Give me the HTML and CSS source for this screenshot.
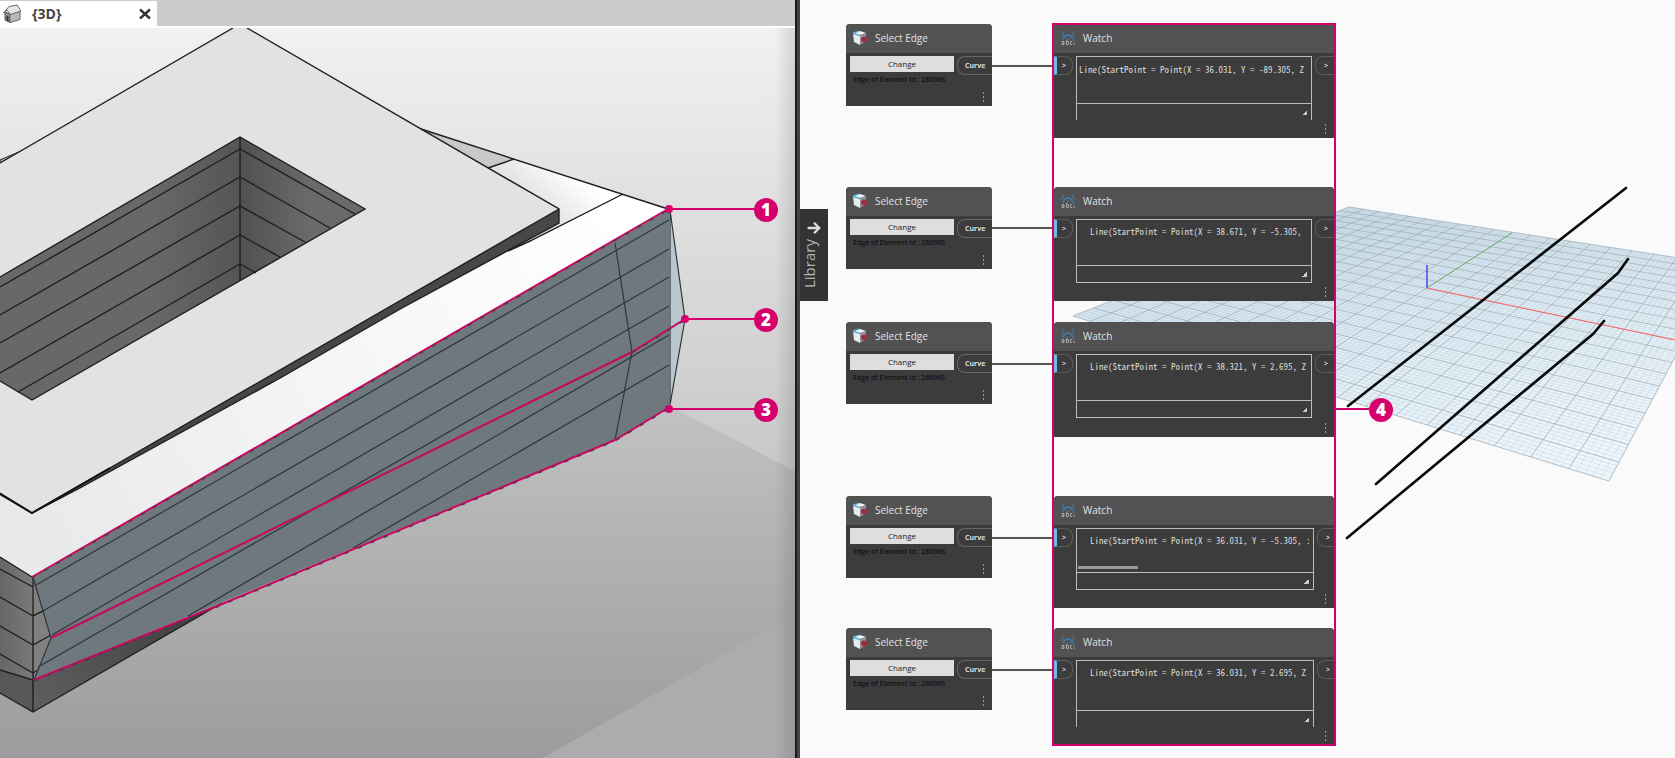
FILE: index.html
```html
<!DOCTYPE html>
<html lang="en">
<head>
<meta charset="utf-8">
<title>Select Edge and Watch</title>
<link rel="stylesheet" href="styles.css">
</head>
<body>
<svg class="defs" aria-hidden="true">
  <symbol id="icon-edge" viewBox="0 0 16 16">
    <path d="M1 3 8 1l6 2-6 2z" fill="#f4f7f9"/>
    <path d="M1 3l7 2v10l-6-3z" fill="#e6edf1"/>
    <path d="M8 5l6-2v8l-6 4z" fill="#8d959a"/>
    <path d="M1 3.500 8 5.500M1.500 3 7 1.200" stroke="#5fb0dc" stroke-width="1.400" fill="none"/>
    <circle cx="12" cy="9.500" r="3" fill="#a8303e"/>
    <path d="M10.500 8l3 3" stroke="#5d2a30"/>
  </symbol>
  <symbol id="icon-watch" viewBox="0 0 16 16">
    <path d="M4 1.500C2.500 1.500 3 4 2.500 5.500L1.500 7M12 1.500c1.500 0 1 2.500 1.500 4l1 1.500" stroke="#4a7ea6" fill="none"/>
    <path d="M3 9.500c2-6 8-6 10 0" stroke="#3d7fb5" stroke-width="1.500" fill="none"/>
    <path d="M6.500 9.500q1.500-2 3 0" stroke="#3d7fb5" fill="none"/>
    <path d="M1.500 11.500h2.500v3H2v-1.500h2M6.500 10v4.500h2v-3h-2M12 11.500h-1.500v3H12M14 10.500v1M14 13v2" stroke="#a5a5a5" fill="none"/>
  </symbol>
</svg>
<main class="app">
  <section class="view3d" aria-label="3D view">
    <nav class="tabs">
      <div class="tab">
        <svg class="tab-icon" viewBox="0 0 20 20" aria-hidden="true">
          <path d="M3 8v8l5 2.500V10z" fill="#8f9599" stroke="#555"/>
          <path d="M8 10v8.500l10-3V7z" fill="#b4babd" stroke="#666"/>
          <path d="M1.500 9 7 2.500 15 1l4 6-10.500 3.500L5 6z" fill="#e2e6e8" stroke="#666"/>
          <path d="M4.500 11.500l2 1v5l-2-1z" fill="#333"/>
        </svg>
        <a class="tab-name" href="#scene">{3D}</a>
        <button class="tab-close" aria-label="Close">
          <svg viewBox="0 0 12 12"><path d="M1 1.500l10 9M11 1.500l-10 9" stroke="#333" stroke-width="2.400"/></svg>
        </button>
      </div>
    </nav>
    <svg class="scene" id="scene" viewBox="0 28 795 730" preserveAspectRatio="xMinYMin slice">
      <defs>
        <linearGradient id="sky" gradientUnits="userSpaceOnUse" x1="0" y1="28" x2="0" y2="758">
          <stop offset="0" stop-color="#f1f1f1"/><stop offset=".3" stop-color="#dcdcdc"/><stop offset=".6" stop-color="#c8c8c8"/><stop offset="1" stop-color="#a6a6a6"/>
        </linearGradient>
        <linearGradient id="ground" gradientUnits="userSpaceOnUse" x1="0" y1="400" x2="0" y2="758">
          <stop offset="0" stop-color="#c2c2c2"/><stop offset="1" stop-color="#9c9c9c"/>
        </linearGradient>
        <linearGradient id="slope" gradientUnits="userSpaceOnUse" x1="20" y1="560" x2="620" y2="200">
          <stop offset="0" stop-color="#e8e8e8"/><stop offset=".5" stop-color="#f5f5f5"/><stop offset="1" stop-color="#fff"/>
        </linearGradient>
        <linearGradient id="back" gradientUnits="userSpaceOnUse" x1="520" y1="215" x2="565" y2="165">
          <stop offset="0" stop-color="#d8d8d8"/><stop offset="1" stop-color="#fff"/>
        </linearGradient>
        <linearGradient id="wellLeft" gradientUnits="userSpaceOnUse" x1="150" y1="0" x2="240" y2="0">
          <stop offset="0" stop-color="#686868"/><stop offset="1" stop-color="#555"/>
        </linearGradient>
        <linearGradient id="wellRight" gradientUnits="userSpaceOnUse" x1="240" y1="0" x2="310" y2="0">
          <stop offset="0" stop-color="#505050"/><stop offset="1" stop-color="#6a6a6a"/>
        </linearGradient>
        <linearGradient id="under" gradientUnits="userSpaceOnUse" x1="33" y1="700" x2="215" y2="610">
          <stop offset="0" stop-color="#5e5e5e"/><stop offset="1" stop-color="#3c3c3c"/>
        </linearGradient>
        <linearGradient id="endFace" gradientUnits="userSpaceOnUse" x1="0" y1="0" x2="33" y2="0">
          <stop offset="0" stop-color="#666"/><stop offset="1" stop-color="#7a7a7a"/>
        </linearGradient>
        <linearGradient id="edgeShade" x1="0" x2="1" y1="0" y2="0">
          <stop offset="0" stop-color="#000" stop-opacity="0"/><stop offset="1" stop-color="#000" stop-opacity=".12"/>
        </linearGradient>
      </defs>
      <rect y="28" width="795" height="730" fill="url(#sky)"/>
      <path d="M0 400H658L795 471V614L543 758H0z" fill="url(#ground)"/>
      <path d="M795 614V758H543z" fill="#acacac"/>
      <path d="M0 160 28 148 0 164z" fill="#bbb" stroke="#222"/>
      <path d="M421 129 668 209 32 577 0 557V493L32 513 559 223V209z" fill="url(#slope)"/>
      <path d="M421 129 514 159 488 168z" fill="#c9c9c9"/>
      <path d="M488 168 514 159 623 194 510 252 559 223V209z" fill="url(#back)"/>
      <path d="M0 163 233 28H247L559 209 32 513 0 493z" fill="#e2e2e2"/>
      <path d="M559 209V223L400 309 282 377 80 488 32 513z" fill="#474747"/>
      <path d="M0 277 240 137V281L32 400 0 381z" fill="url(#wellLeft)"/>
      <path d="M240 137 365 209 240 281z" fill="url(#wellRight)"/>
      <path d="M0 557 32 577 34 680 33 712 0 693z" fill="url(#endFace)"/>
      <path d="M0 670 33 680V712L0 693z" fill="#585858"/>
      <path d="M33 577 51 638 34 680z" fill="#808080"/>
      <path d="M33 680 222 603 33 712z" fill="url(#under)"/>
      <path d="M32 577 669 209V408L615 440 220 603 34 680 51 638z" fill="#6f787c"/>
      <path d="M670 210 685 319 670 405z" fill="#b9c7cd"/>
      <g class="edges">
        <path d="M0 163 233 28M247 28 559 209V223L400 309 282 377 80 488 32 513M559 209 32 513 0 493"/>
        <path d="M421 129 668 209M514 159 488 168M623 194 530 241 508 251"/>
        <path d="M0 277 240 137 365 209 32 400 0 381M240 137V281"/>
        <path d="M0 287 240 149 355 214M0 315 240 177 330 228M0 343 240 206 305 242M0 373 240 235 280 257M18 392 240 264 256 273"/>
        <path d="M0 557 32 577M0 569 33 587M0 597 33 616 43 611M0 626 33 645 51 635M0 654 33 673 38 670M0 670 33 680M0 693 33 712 222 603M33 577V712"/>
      </g>
      <path class="thick-edge" d="M0 494 32 513 110 468"/>
      <g class="seams">
        <path d="M33 577 51 638 34 680M36 585 669 220M43 611 669 249M52 635 669 277M38 667 669 306M188 616 669 335M353 548 669 365"/>
        <path d="M615 243 632 352 631 357 615 440M670 210V405L685 319z"/>
      </g>
      <path class="picked" d="M32 577 668 209M51 638 632 352 685 319M34 680 222 604 615 440 668 408"/>
      <path class="picked-gap" d="M32 578 668 210M632 353 685 320M34 681 222 605 615 441 668 409"/>
      <rect x="775" y="28" width="20" height="730" fill="url(#edgeShade)"/>
      <g class="callouts">
        <path d="M669 209H755M685 319H755M669 409H755"/>
        <circle cx="669" cy="209" r="4"/><circle cx="685" cy="319" r="4"/><circle cx="669" cy="409" r="4"/>
        <circle cx="766" cy="210" r="12"/><circle cx="766" cy="320" r="12"/><circle cx="766" cy="410" r="12"/>
        <text x="766" y="216">1</text><text x="766" y="326">2</text><text x="766" y="416">3</text>
      </g>
    </svg>
  </section>
  <div class="divider"></div>
  <section class="graph" aria-label="Graph">
    <svg class="preview" width="875" height="758" viewBox="800 0 875 758" aria-hidden="true">
      <defs>
        <linearGradient id="plane" gradientUnits="userSpaceOnUse" x1="1450" y1="220" x2="1530" y2="460">
          <stop offset="0" stop-color="#d9e8f1"/><stop offset="1" stop-color="#edf5fa"/>
        </linearGradient>
      </defs>
      <path d="M1073 316 1349 207 1724 265 1609 481z" fill="url(#plane)"/>
      <path id="grid-minor" class="grid-minor"/>
      <path id="grid-major" class="grid-major"/>
      <path d="M1427 288 1512 233" stroke="#6bb56b"/>
      <path d="M1427 288 1675 340" stroke="#ff6464"/>
      <path d="M1427 288V265" stroke="#6a6af0" stroke-width="2"/>
      <path class="curves" d="M1626 188 1348 406M1628 259 1618 273 1376 484M1604 321 1593 334 1347 538"/>
      <path class="wires" d="M992 66H1054M992 228H1054M992 364H1054M992 538H1054M992 670H1054"/>
    </svg>
    <button class="library"><span>Library</span>
      <svg viewBox="0 0 12 12"><path d="M6 11.500V2M1.500 6 6 1.500 10.500 6" stroke="#ddd" stroke-width="2" fill="none"/></svg>
    </button>

    <article class="node select n1">
      <h2><svg><use href="#icon-edge"/></svg>Select Edge</h2>
      <div class="row"><button class="change">Change</button><span class="port-name">Curve</span></div>
      <p>Edge of Element Id : 286965</p><i class="more"></i>
    </article>
    <article class="node select n2">
      <h2><svg><use href="#icon-edge"/></svg>Select Edge</h2>
      <div class="row"><button class="change">Change</button><span class="port-name">Curve</span></div>
      <p>Edge of Element Id : 286965</p><i class="more"></i>
    </article>
    <article class="node select n3">
      <h2><svg><use href="#icon-edge"/></svg>Select Edge</h2>
      <div class="row"><button class="change">Change</button><span class="port-name">Curve</span></div>
      <p>Edge of Element Id : 286965</p><i class="more"></i>
    </article>
    <article class="node select n4">
      <h2><svg><use href="#icon-edge"/></svg>Select Edge</h2>
      <div class="row"><button class="change">Change</button><span class="port-name">Curve</span></div>
      <p>Edge of Element Id : 286965</p><i class="more"></i>
    </article>
    <article class="node select n5">
      <h2><svg><use href="#icon-edge"/></svg>Select Edge</h2>
      <div class="row"><button class="change">Change</button><span class="port-name">Curve</span></div>
      <p>Edge of Element Id : 286965</p><i class="more"></i>
    </article>

    <article class="node watch n1 flush">
      <h2><svg><use href="#icon-watch"/></svg>Watch</h2>
      <div class="io"><span class="port in">&gt;</span>
        <div class="box open"><pre>Line(StartPoint = Point(X = 36.031, Y = -89.305, Z</pre><div class="grip"></div></div>
        <span class="port out">&gt;</span></div><i class="more"></i>
    </article>
    <article class="node watch n2">
      <h2><svg><use href="#icon-watch"/></svg>Watch</h2>
      <div class="io"><span class="port in">&gt;</span>
        <div class="box"><pre>Line(StartPoint = Point(X = 38.671, Y = -5.305,</pre><div class="grip"></div></div>
        <span class="port out">&gt;</span></div><i class="more"></i>
    </article>
    <article class="node watch n3">
      <h2><svg><use href="#icon-watch"/></svg>Watch</h2>
      <div class="io"><span class="port in">&gt;</span>
        <div class="box"><pre>Line(StartPoint = Point(X = 38.321, Y = 2.695, Z</pre><div class="grip"></div></div>
        <span class="port out">&gt;</span></div><i class="more"></i>
    </article>
    <article class="node watch n4 wide">
      <h2><svg><use href="#icon-watch"/></svg>Watch</h2>
      <div class="io"><span class="port in">&gt;</span>
        <div class="box"><pre>Line(StartPoint = Point(X = 36.031, Y = -5.305, :</pre><div class="thumb"></div><div class="grip"></div></div>
        <span class="port out">&gt;</span></div><i class="more"></i>
    </article>
    <article class="node watch n5 wide tall">
      <h2><svg><use href="#icon-watch"/></svg>Watch</h2>
      <div class="io"><span class="port in">&gt;</span>
        <div class="box open"><pre>Line(StartPoint = Point(X = 36.031, Y = 2.695, Z</pre><div class="grip"></div></div>
        <span class="port out">&gt;</span></div><i class="more"></i>
    </article>

    <div class="frame"></div>
    <div class="frame-callout"><span>4</span></div>
  </section>
</main>
<script src="grid.js"></script>
</body>
</html>
```

FILE: styles.css
```css
* { box-sizing: border-box; }
body { margin: 0; font-family: "Open Sans", "Noto Sans", sans-serif; }
button { font: inherit; border: 0; padding: 0; margin: 0; }
.defs { position: absolute; width: 0; height: 0; }

.app { display: grid; grid-template-columns: minmax(0, 795fr) 5px minmax(0, 875fr); min-height: 100vh; overflow: hidden; }

.view3d { display: flex; flex-direction: column; min-width: 0; }
.tabs { display: flex; height: 28px; padding-top: 1px; background: #ccc; border-bottom: 2px solid #fcfcfc; }
.tab { display: flex; align-items: center; width: 157px; padding: 1px 6px 0 2px; background: #fff; }
.tab-icon { width: 20px; height: 20px; }
.tab-name { margin-left: 10px; flex: 1; font-size: 14px; font-weight: 700; line-height: 20px; color: #444; text-decoration: none; }
.tab-close { width: 12px; height: 12px; background: none; }
.tab-close svg { display: block; }
.scene { display: block; flex: 1; width: 100%; min-height: 0; }

.edges { fill: none; stroke: #1e1e1e; stroke-width: 1.4; }
.thick-edge { fill: none; stroke: #111; stroke-width: 2; }
.seams { fill: none; stroke: #2c373c; stroke-width: 1.2; }
.picked { fill: none; stroke: #c9075f; stroke-width: 2; }
.picked-gap { fill: none; stroke: #4c3a4c; stroke-width: 1.4; stroke-dasharray: 4 10; }
.callouts path { stroke: #d6006d; stroke-width: 2; }
.callouts circle { fill: #d6006d; }
.callouts text { fill: #fff; font-size: 17px; font-weight: 800; text-anchor: middle; }

.divider { background: linear-gradient(90deg, #1c1c1c 0 2px, #444 2px); }

.graph { position: relative; min-width: 0; background: #fafafa; overflow: hidden; }
.preview { position: absolute; left: 0; top: 0; }
.grid-minor { fill: none; stroke: #a9c3d2; stroke-width: .3; }
.grid-major { fill: none; stroke: #98a6ae; stroke-width: .6; }
.curves { fill: none; stroke: #080808; stroke-width: 2.6; stroke-linecap: round; }
.wires { stroke: #555; stroke-width: 2; }

.library { position: absolute; left: 0; top: 209px; width: 28px; height: 92px; display: flex; align-items: center; justify-content: flex-end; gap: 4px; padding: 12px 0; writing-mode: vertical-rl; transform: rotate(180deg); background: #333; color: #b5b5b5; font-size: 15px; line-height: 18px; }
.library span { padding-left: 10px; }
.library svg { width: 14px; height: 14px; transform: rotate(-90deg); }

.node { position: absolute; background: #3c3c3c; color: #ddd; border-radius: 4px 4px 0 0; overflow: hidden; }
.node h2 { display: flex; align-items: center; gap: 7px; height: 29px; margin: 0 0 3px; padding: 0 0 2px 6px; background: #525252; font-size: 10px; line-height: 16px; font-weight: 400; color: #e2e2e2; }
.node h2 svg { width: 16px; height: 16px; }
.select { left: 46px; width: 146px; height: 82px; }
.watch { left: 254px; width: 280px; height: 114px; }
.flush { border-radius: 0; }
.n1 { top: 24px; }
.n2 { top: 187px; }
.n3 { top: 322px; }
.n4 { top: 496px; }
.n5 { top: 628px; }

.row { display: flex; justify-content: space-between; height: 19px; padding-left: 4px; }
.change { width: 104px; height: 16px; background: #dedede; color: #222; font-size: 8px; line-height: 16px; }
.port-name { width: 35px; border: 1px solid #666; border-right: 0; border-radius: 8px 0 0 8px; padding-left: 7px; font-size: 7px; font-weight: 700; line-height: 17px; }
.select p { margin: 0; padding-left: 7px; font-size: 7px; font-weight: 600; line-height: 10px; color: #111; }
.more { position: absolute; right: 8px; bottom: 4px; width: 1px; height: 10px; background: repeating-linear-gradient(#999 0 2px, transparent 2px 4px); }

.io { display: grid; grid-template-columns: 19px minmax(0, 1fr) 19px; column-gap: 3px; align-items: start; }
.port { height: 19px; border: 1px solid #5c5c5c; font-size: 7px; font-weight: 700; line-height: 17px; }
.in { border-left: 3px solid #6fbbe4; border-radius: 0 8px 8px 0; padding-left: 5px; }
.out { border-right: 0; border-radius: 8px 0 0 8px; padding-left: 8px; }
.box { display: flex; flex-direction: column; height: 64px; border: 1px solid #bdbdbd; }
.box pre { flex: 1; margin: 0; padding: 7px 0 0 13px; overflow: hidden; font-family: "Noto Sans Mono CJK SC", "Liberation Mono", monospace; font-size: 9px; line-height: 10px; color: #ddd; }
.flush pre { padding: 8px 0 0 2px; }
.open { border-bottom: 0; }
.wide .io { grid-template-columns: 19px minmax(0, 1fr) 17px; }
.n3.watch { height: 115px; }
.n4.watch { height: 112px; }
.n4 .box { height: 62px; }
.tall.watch { height: 117px; }
.tall .box { height: 67px; }
.thumb { width: 60px; height: 3px; margin: 0 0 3px 1px; background: #999; }
.grip { position: relative; height: 17px; border-top: 1px solid #bdbdbd; }
.grip::after { content: ""; position: absolute; right: 4px; bottom: 5px; width: 5px; height: 5px; background: linear-gradient(135deg, transparent 50%, #ccc 50%); }

.frame { position: absolute; left: 252px; top: 23px; width: 284px; height: 723px; border: 2px solid #d6006d; }
.frame-callout { position: absolute; left: 536px; top: 398px; display: flex; align-items: center; }
.frame-callout::before { content: ""; width: 33px; height: 2px; margin-bottom: 3px; background: #d6006d; }
.frame-callout span { width: 24px; height: 24px; border-radius: 50%; background: #d6006d; color: #fff; font-size: 17px; font-weight: 800; line-height: 24px; text-align: center; }
```

FILE: grid.js
```js
// Projects a square ground grid onto the preview plane.
const [a, b, c, d] = [[1073, 316], [1349, 207], [1724, 265], [1609, 481]];
const sx = a[0] - b[0] + c[0] - d[0];
const sy = a[1] - b[1] + c[1] - d[1];
const x1 = b[0] - c[0], x2 = d[0] - c[0];
const y1 = b[1] - c[1], y2 = d[1] - c[1];
const det = x1 * y2 - x2 * y1;
const g = (sx * y2 - x2 * sy) / det;
const h = (x1 * sy - sx * y1) / det;

function project(u, v) {
  const w = g * u + h * v + 1;
  const x = ((b[0] - a[0] + g * b[0]) * u + (d[0] - a[0] + h * d[0]) * v + a[0]) / w;
  const y = ((b[1] - a[1] + g * b[1]) * u + (d[1] - a[1] + h * d[1]) * v + a[1]) / w;
  return x.toFixed(1) + " " + y.toFixed(1);
}

function lines(count) {
  let path = "";
  for (let i = 0; i <= count; i++) {
    const t = i / count;
    path += "M" + project(t, 0) + "L" + project(t, 1);
    path += "M" + project(0, t) + "L" + project(1, t);
  }
  return path;
}

document.getElementById("grid-minor").setAttribute("d", lines(100));
document.getElementById("grid-major").setAttribute("d", lines(20));
```
